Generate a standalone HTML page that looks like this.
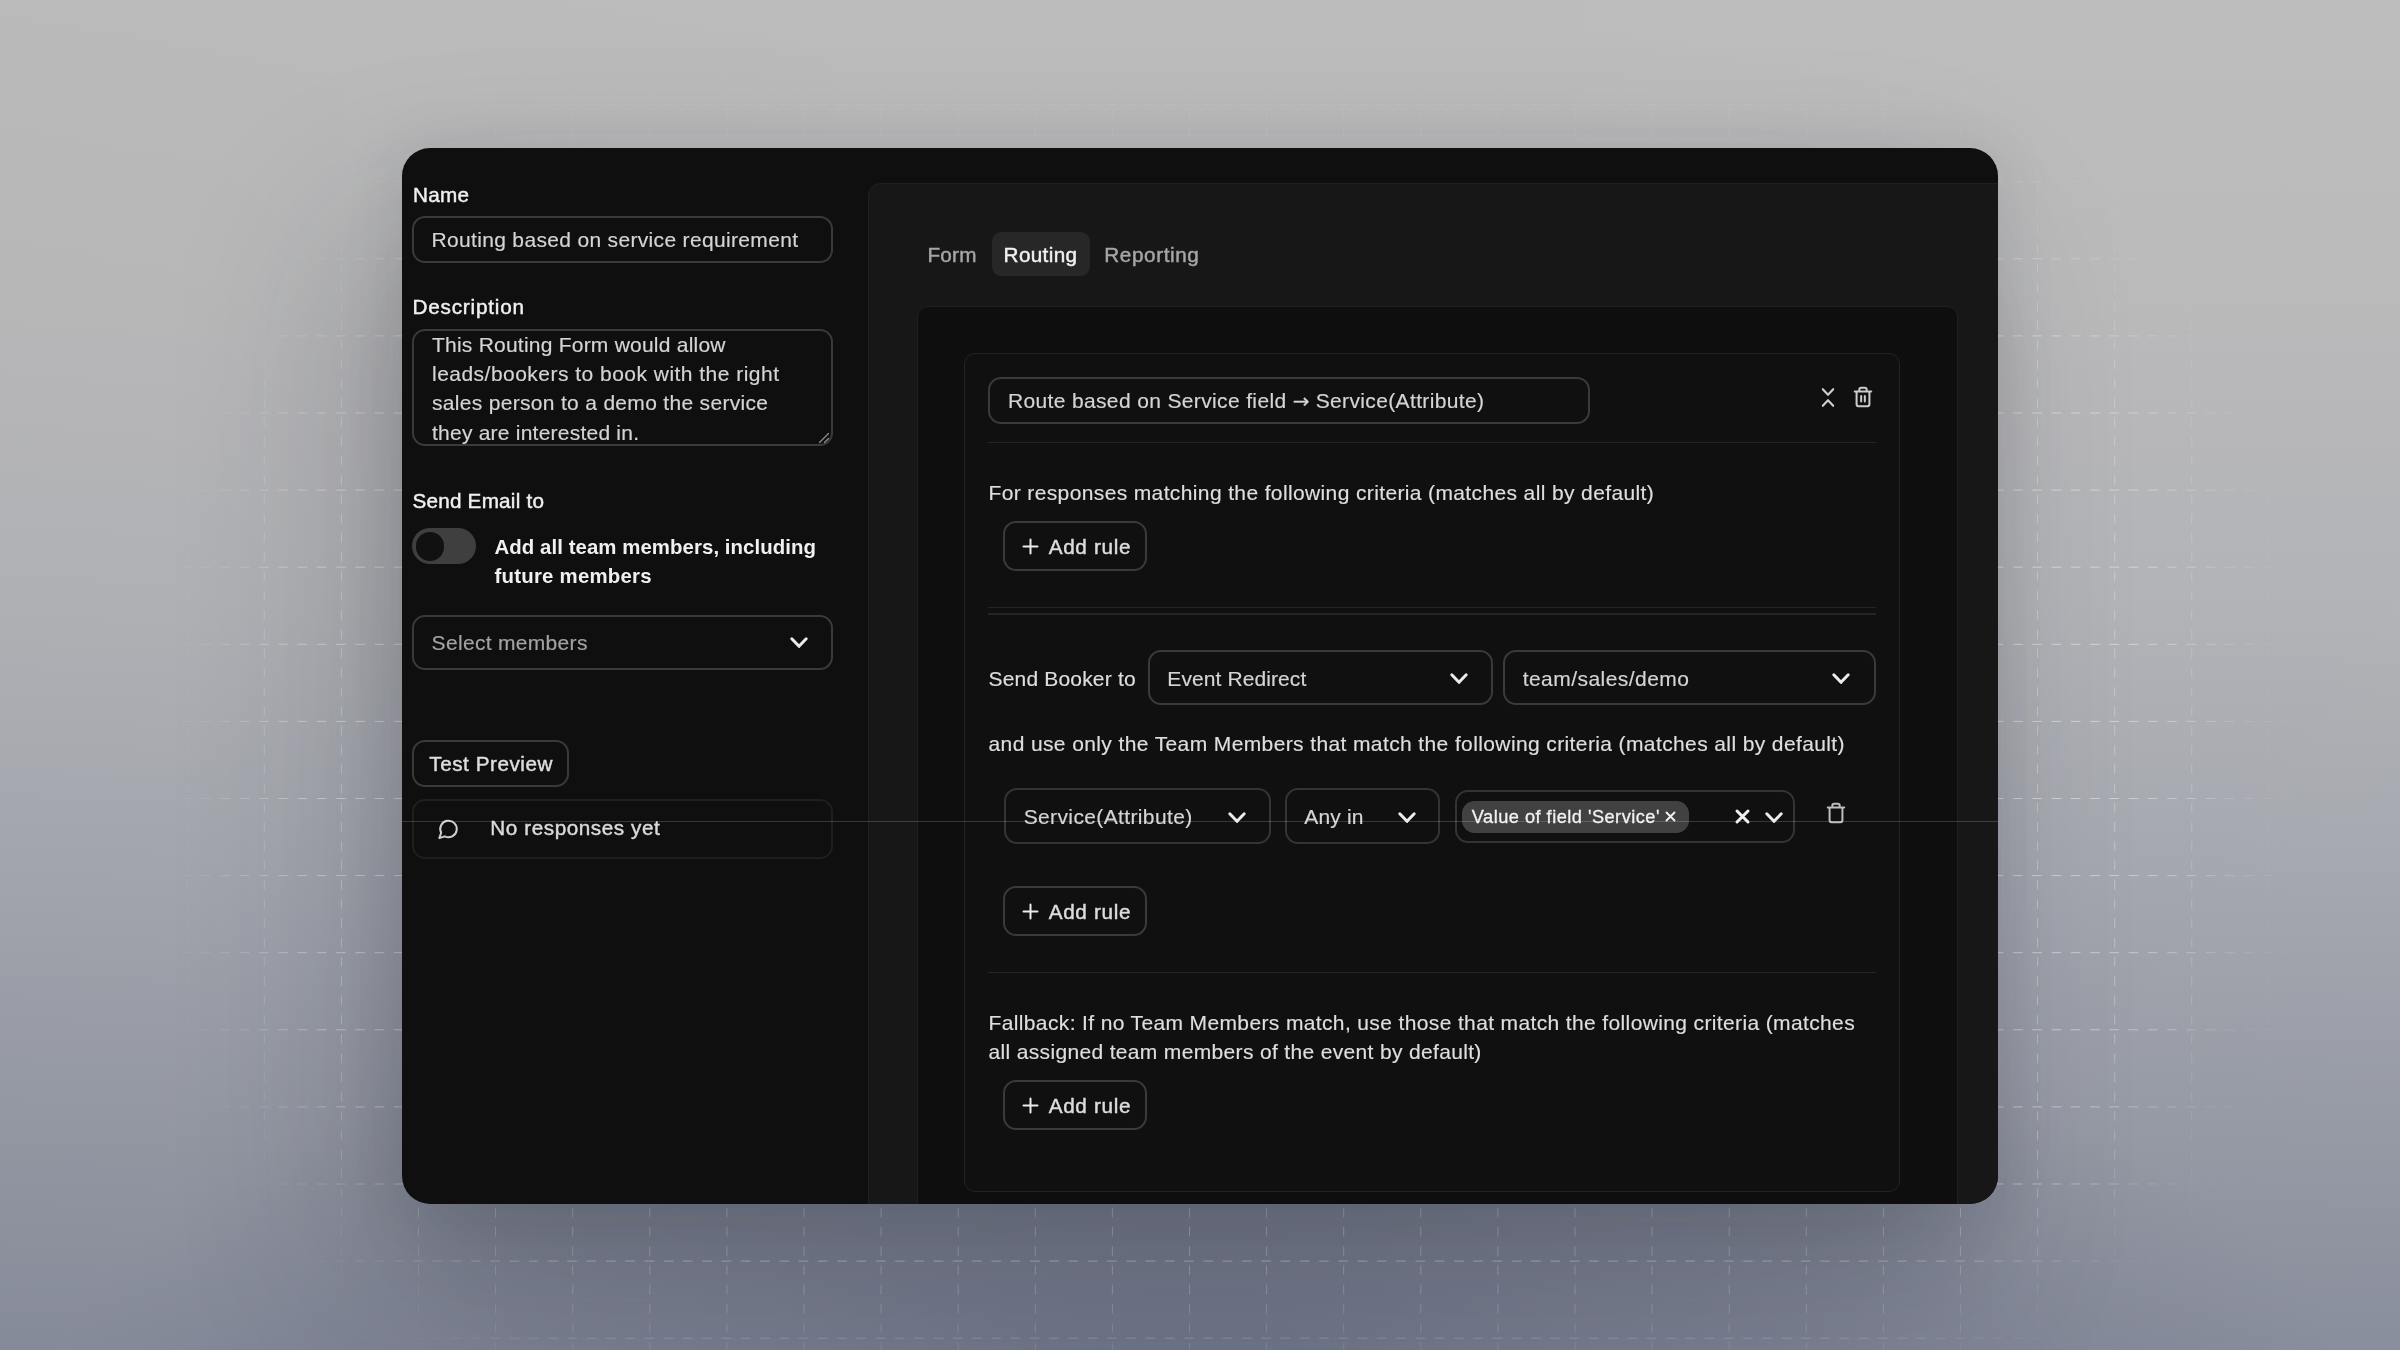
<!DOCTYPE html>
<html lang="en">
<head>
<meta charset="utf-8">
<title>Routing Form</title>
<style>
*{box-sizing:border-box;margin:0;padding:0}
html,body{width:2400px;height:1350px;overflow:hidden}
body{font-family:"Liberation Sans",Arial,sans-serif;color:#e6e6e6;position:relative;
background:
 radial-gradient(ellipse 1150px 430px at 1200px 1400px,rgba(92,99,122,.62),rgba(92,99,122,0) 100%),
 linear-gradient(90deg,rgba(20,24,40,.012) 0%,rgba(0,0,0,0) 45%,rgba(255,255,255,.02) 100%),
 linear-gradient(180deg,#bcbcbc 0%,#b9b9ba 22%,#b1b2b6 45%,#a3a6ae 65%,#9397a2 85%,#878c9b 100%);
}
#grid{position:absolute;left:0;top:0;width:2400px;height:1350px}
#shadow{position:absolute;left:402px;top:148px;width:1596px;height:1056px;border-radius:28px;
 box-shadow:0 4px 60px 0 rgba(28,32,48,.10),0 90px 90px -40px rgba(28,32,48,.11),-45px 80px 180px 0 rgba(28,32,48,.21)}
#panel{position:absolute;left:402px;top:148px;width:1596px;height:1056px;border-radius:28px;background:#0f0f0f;overflow:hidden}
#pc{position:absolute;left:-402px;top:-148px;width:2400px;height:1350px;opacity:.999}
.a{position:absolute}
.t{position:absolute;white-space:nowrap;line-height:1}
.box{position:absolute;border:2px solid #3a3a3a;border-radius:13px}
.btn{position:absolute;border:2px solid #3a3a3a;border-radius:13px}
.hr{position:absolute;height:1.5px;background:#242424}
svg.i{position:absolute;overflow:visible}
.ar{font-family:"DejaVu Sans",sans-serif;font-size:20px;letter-spacing:0;position:relative;top:-.5px}
</style>
</head>
<body>
<svg id="grid" width="2400" height="1350">
 <defs>
  <pattern id="gp" x="32.5" y="27" width="77.1" height="77.1" patternUnits="userSpaceOnUse">
   <path d="M0 0H4.8M14.45 0H24.1M33.75 0H43.35M53 0H62.65M72.3 0H77.1" stroke="#fff" stroke-opacity=".62" stroke-width="1.6" fill="none"/>
   <path d="M0 4.8V14.45M0 24.1V33.75M0 43.35V53M0 62.65V72.3" stroke="#fff" stroke-opacity=".44" stroke-width="1.5" fill="none"/>
  </pattern>
  <filter id="bl" filterUnits="userSpaceOnUse" x="-300" y="-300" width="3000" height="1950"><feGaussianBlur stdDeviation="62"/></filter>
  <mask id="mk" maskUnits="userSpaceOnUse" x="0" y="0" width="2400" height="1350"><rect x="250" y="160" width="1960" height="1165" rx="400" fill="#fff" filter="url(#bl)"/></mask>
 </defs>
 <rect width="2400" height="1350" fill="url(#gp)" mask="url(#mk)"/>
</svg>
<div id="shadow"></div>
<div id="panel"><div id="pc">

 <!-- ===== RIGHT COLUMN containers ===== -->
 <div class="a" style="left:867.5px;top:182.5px;width:1200px;height:1100px;background:#171717;border:1.5px solid #1f1f1f;border-radius:12px 0 0 0"></div>
 <div class="a" style="left:991.5px;top:232px;width:98px;height:43.5px;background:#272727;border-radius:9px"></div>
 <div class="a" style="left:917px;top:306px;width:1041px;height:960px;background:#0e0e0e;border:1.5px solid #1f1f1f;border-radius:11px"></div>
 <div class="a" style="left:964px;top:352.5px;width:936px;height:839.5px;background:#101010;border:1.5px solid #232323;border-radius:11px"></div>

 <!-- ===== LEFT COLUMN ===== -->
 <div class="box" style="left:412px;top:215.5px;width:420.5px;height:47px"></div>
 <div class="box" style="left:412px;top:329px;width:420.5px;height:117px"></div>
 <svg class="i" style="left:818px;top:432px" width="12" height="12" viewBox="0 0 12 12"><path d="M1.5 10.5L10.5 1.5M6.5 10.5L10.5 6.5" stroke="#8a8a8a" stroke-width="1.4" fill="none" stroke-linecap="round"/></svg>
 <div class="a" style="left:412.2px;top:528px;width:64px;height:36px;border-radius:18px;background:#3f3f3f"></div>
 <div class="a" style="left:415.5px;top:532px;width:28.5px;height:28.5px;border-radius:50%;background:#111"></div>
 <div class="box" style="left:412px;top:614.5px;width:420.5px;height:55.5px"></div>
 <svg class="i" style="left:789.5px;top:637px" width="18" height="12" viewBox="0 0 18 12"><path d="M1.8 1.8L9 9.3L16.2 1.8" stroke="#ececec" stroke-width="3" fill="none" stroke-linecap="round" stroke-linejoin="round"/></svg>
 <div class="btn" style="left:412px;top:739.5px;width:157px;height:47px"></div>
 <div class="box" style="left:412px;top:798.5px;width:420.5px;height:60px;border-color:#1f1f1f"></div>
 <svg class="i" style="left:437px;top:818px" width="23" height="22" viewBox="0 0 24 24"><path d="M7.9 20A9 9 0 1 0 4 16.1L2 22Z" stroke="#cfcfcf" stroke-width="2.2" fill="none" stroke-linecap="round" stroke-linejoin="round"/></svg>

 <!-- ===== ROUTE CARD ===== -->
 <div class="box" style="left:988px;top:377px;width:601.5px;height:47px"></div>
 <svg class="i" style="left:1820px;top:387px" width="16" height="21" viewBox="0 0 16 21"><path d="M2.8 2.2L8 7.8L13.2 2.2M2.8 18.8L8 13.2L13.2 18.8" stroke="#cfcfcf" stroke-width="2.1" fill="none" stroke-linecap="round" stroke-linejoin="round"/></svg>
 <svg class="i" style="left:1852px;top:385px" width="22" height="24" viewBox="0 0 24 24"><path d="M3 6h18M19 6v14a2 2 0 0 1-2 2H7a2 2 0 0 1-2-2V6M8 6V4a2 2 0 0 1 2-2h4a2 2 0 0 1 2 2v2M10 11v6M14 11v6" stroke="#cbcbcb" stroke-width="2.2" fill="none" stroke-linecap="round" stroke-linejoin="round"/></svg>
 <div class="hr" style="left:988px;top:441.5px;width:888px"></div>

 <div class="btn" style="left:1003px;top:521px;width:143.5px;height:50px"></div>
 <svg class="i" style="left:1022px;top:538px" width="17" height="17" viewBox="0 0 17 17"><path d="M8.5 1.5V15.5M1.5 8.5H15.5" stroke="#ececec" stroke-width="2" fill="none" stroke-linecap="round"/></svg>
 <div class="hr" style="left:988px;top:606.5px;width:888px"></div>
 <div class="hr" style="left:988px;top:613px;width:888px"></div>

 <div class="box" style="left:1147.5px;top:649.8px;width:345px;height:55.6px"></div>
 <svg class="i" style="left:1449.5px;top:673px" width="18" height="12" viewBox="0 0 18 12"><path d="M1.8 1.8L9 9.3L16.2 1.8" stroke="#ececec" stroke-width="3" fill="none" stroke-linecap="round" stroke-linejoin="round"/></svg>
 <div class="box" style="left:1503px;top:649.8px;width:372.5px;height:55.6px"></div>
 <svg class="i" style="left:1832px;top:673px" width="18" height="12" viewBox="0 0 18 12"><path d="M1.8 1.8L9 9.3L16.2 1.8" stroke="#ececec" stroke-width="3" fill="none" stroke-linecap="round" stroke-linejoin="round"/></svg>

 <div class="box" style="left:1004px;top:788.3px;width:266.5px;height:55.6px;border-color:#343434"></div>
 <svg class="i" style="left:1228px;top:811.5px" width="18" height="12" viewBox="0 0 18 12"><path d="M1.8 1.8L9 9.3L16.2 1.8" stroke="#ececec" stroke-width="3" fill="none" stroke-linecap="round" stroke-linejoin="round"/></svg>
 <div class="box" style="left:1285px;top:788.3px;width:155px;height:55.6px;border-color:#343434"></div>
 <svg class="i" style="left:1397.5px;top:811.5px" width="18" height="12" viewBox="0 0 18 12"><path d="M1.8 1.8L9 9.3L16.2 1.8" stroke="#ececec" stroke-width="3" fill="none" stroke-linecap="round" stroke-linejoin="round"/></svg>
 <div class="box" style="left:1455px;top:790px;width:340px;height:53px;border-color:#343434"></div>
 <div class="a" style="left:1461.5px;top:800.5px;width:227.5px;height:32px;border-radius:12.5px;background:#414141"></div>
 <svg class="i" style="left:1664.5px;top:811px" width="11" height="11" viewBox="0 0 11 11"><path d="M1.5 1.5L9.5 9.5M9.5 1.5L1.5 9.5" stroke="#f0f0f0" stroke-width="1.9" fill="none" stroke-linecap="round"/></svg>
 <svg class="i" style="left:1734.5px;top:809px" width="15" height="15" viewBox="0 0 15 15"><path d="M2 2L13 13M13 2L2 13" stroke="#f0f0f0" stroke-width="3" fill="none" stroke-linecap="round"/></svg>
 <svg class="i" style="left:1764.5px;top:811.5px" width="18" height="12" viewBox="0 0 18 12"><path d="M1.8 1.8L9 9.3L16.2 1.8" stroke="#ececec" stroke-width="3" fill="none" stroke-linecap="round" stroke-linejoin="round"/></svg>
 <svg class="i" style="left:1825px;top:801px" width="22" height="24" viewBox="0 0 24 24"><path d="M3 6h18M19 6v14a2 2 0 0 1-2 2H7a2 2 0 0 1-2-2V6M8 6V4a2 2 0 0 1 2-2h4a2 2 0 0 1 2 2v2" stroke="#bdbdbd" stroke-width="2.2" fill="none" stroke-linecap="round" stroke-linejoin="round"/></svg>

 <div class="btn" style="left:1003px;top:886px;width:143.5px;height:50px"></div>
 <svg class="i" style="left:1022px;top:903px" width="17" height="17" viewBox="0 0 17 17"><path d="M8.5 1.5V15.5M1.5 8.5H15.5" stroke="#ececec" stroke-width="2" fill="none" stroke-linecap="round"/></svg>
 <div class="hr" style="left:988px;top:971.5px;width:888px"></div>

 <div class="btn" style="left:1003px;top:1080.3px;width:143.5px;height:50px"></div>
 <svg class="i" style="left:1022px;top:1097px" width="17" height="17" viewBox="0 0 17 17"><path d="M8.5 1.5V15.5M1.5 8.5H15.5" stroke="#ececec" stroke-width="2" fill="none" stroke-linecap="round"/></svg>

 <!-- ===== TEXT ===== -->
<div class="t" style="left:413.0px;top:185.00px;font-size:20.7px;color:#f0f0f0;letter-spacing:0.271px;-webkit-text-stroke:0.45px #f0f0f0">Name</div>
<div class="t" style="left:431.5px;top:229.00px;font-size:21.0px;color:#d4d4d4;letter-spacing:0.332px;-webkit-text-stroke:0.18px #d4d4d4">Routing based on service requirement</div>
<div class="t" style="left:412.5px;top:297.00px;font-size:20.7px;color:#f0f0f0;letter-spacing:0.802px;-webkit-text-stroke:0.45px #f0f0f0">Description</div>
<div class="t" style="left:432.0px;top:334.00px;font-size:21.0px;color:#d4d4d4;letter-spacing:0.228px;-webkit-text-stroke:0.18px #d4d4d4">This Routing Form would allow</div>
<div class="t" style="left:432.0px;top:363.00px;font-size:21.0px;color:#d4d4d4;letter-spacing:0.475px;-webkit-text-stroke:0.18px #d4d4d4">leads/bookers to book with the right</div>
<div class="t" style="left:432.0px;top:392.00px;font-size:21.0px;color:#d4d4d4;letter-spacing:0.312px;-webkit-text-stroke:0.18px #d4d4d4">sales person to a demo the service</div>
<div class="t" style="left:432.0px;top:422.00px;font-size:21.0px;color:#d4d4d4;letter-spacing:0.229px;-webkit-text-stroke:0.18px #d4d4d4">they are interested in.</div>
<div class="t" style="left:412.4px;top:491.00px;font-size:20.7px;color:#f0f0f0;letter-spacing:0.234px;-webkit-text-stroke:0.45px #f0f0f0">Send Email to</div>
<div class="t" style="left:494.5px;top:537.00px;font-size:20.4px;color:#f0f0f0;letter-spacing:0.066px;font-weight:700">Add all team members, including</div>
<div class="t" style="left:494.5px;top:566.00px;font-size:20.4px;color:#f0f0f0;letter-spacing:0.230px;font-weight:700">future members</div>
<div class="t" style="left:431.6px;top:632.00px;font-size:21.0px;color:#a3a3a3;letter-spacing:0.314px;-webkit-text-stroke:0.18px #a3a3a3">Select members</div>
<div class="t" style="left:429.3px;top:754.00px;font-size:20.7px;color:#dedede;letter-spacing:0.539px;-webkit-text-stroke:0.45px #dedede">Test Preview</div>
<div class="t" style="left:490.3px;top:818.00px;font-size:20.7px;color:#dadada;letter-spacing:0.567px;-webkit-text-stroke:0.45px #dadada">No responses yet</div>
<div class="t" style="left:927.5px;top:245.00px;font-size:20.7px;color:#a6a6a6;letter-spacing:0.211px;-webkit-text-stroke:0.45px #a6a6a6">Form</div>
<div class="t" style="left:1003.6px;top:245.00px;font-size:20.7px;color:#f2f2f2;letter-spacing:0.348px;-webkit-text-stroke:0.45px #f2f2f2">Routing</div>
<div class="t" style="left:1104.3px;top:245.00px;font-size:20.7px;color:#a6a6a6;letter-spacing:0.600px;-webkit-text-stroke:0.45px #a6a6a6">Reporting</div>
<div class="t" style="left:1007.9px;top:390.00px;font-size:21.0px;color:#d4d4d4;letter-spacing:0.361px;-webkit-text-stroke:0.18px #d4d4d4">Route based on Service field <span class="ar">→</span> Service(Attribute)</div>
<div class="t" style="left:988.5px;top:482.00px;font-size:21.0px;color:#dedede;letter-spacing:0.371px;-webkit-text-stroke:0.18px #dedede">For responses matching the following criteria (matches all by default)</div>
<div class="t" style="left:1048.7px;top:537.00px;font-size:20.7px;color:#dddddd;letter-spacing:0.677px;-webkit-text-stroke:0.45px #dddddd">Add rule</div>
<div class="t" style="left:988.5px;top:668.00px;font-size:21.0px;color:#dedede;letter-spacing:0.180px;-webkit-text-stroke:0.18px #dedede">Send Booker to</div>
<div class="t" style="left:1167.3px;top:668.00px;font-size:21.0px;color:#d4d4d4;letter-spacing:0.097px;-webkit-text-stroke:0.18px #d4d4d4">Event Redirect</div>
<div class="t" style="left:1522.7px;top:668.00px;font-size:21.0px;color:#d4d4d4;letter-spacing:0.456px;-webkit-text-stroke:0.18px #d4d4d4">team/sales/demo</div>
<div class="t" style="left:988.5px;top:733.00px;font-size:21.0px;color:#dedede;letter-spacing:0.386px;-webkit-text-stroke:0.18px #dedede">and use only the Team Members that match the following criteria (matches all by default)</div>
<div class="t" style="left:1023.7px;top:806.00px;font-size:21.0px;color:#d4d4d4;letter-spacing:0.369px;-webkit-text-stroke:0.18px #d4d4d4">Service(Attribute)</div>
<div class="t" style="left:1304.3px;top:806.00px;font-size:21.0px;color:#d4d4d4;letter-spacing:0.165px;-webkit-text-stroke:0.18px #d4d4d4">Any in</div>
<div class="t" style="left:1471.8px;top:808.00px;font-size:18.2px;color:#f2f2f2;letter-spacing:0.485px;-webkit-text-stroke:0.3px #f2f2f2">Value of field 'Service'</div>
<div class="t" style="left:1048.7px;top:902.00px;font-size:20.7px;color:#dddddd;letter-spacing:0.677px;-webkit-text-stroke:0.45px #dddddd">Add rule</div>
<div class="t" style="left:988.5px;top:1012.00px;font-size:21.0px;color:#dedede;letter-spacing:0.368px;-webkit-text-stroke:0.18px #dedede">Fallback: If no Team Members match, use those that match the following criteria (matches</div>
<div class="t" style="left:988.5px;top:1041.00px;font-size:21.0px;color:#dedede;letter-spacing:0.339px;-webkit-text-stroke:0.18px #dedede">all assigned team members of the event by default)</div>
<div class="t" style="left:1048.7px;top:1096.00px;font-size:20.7px;color:#dddddd;letter-spacing:0.677px;-webkit-text-stroke:0.45px #dddddd">Add rule</div>

 <!-- thin horizontal guide line across the panel -->
 <div class="a" style="left:402px;top:820.5px;width:1596px;height:1px;background:rgba(255,255,255,.17)"></div>
</div></div>
</body>
</html>
